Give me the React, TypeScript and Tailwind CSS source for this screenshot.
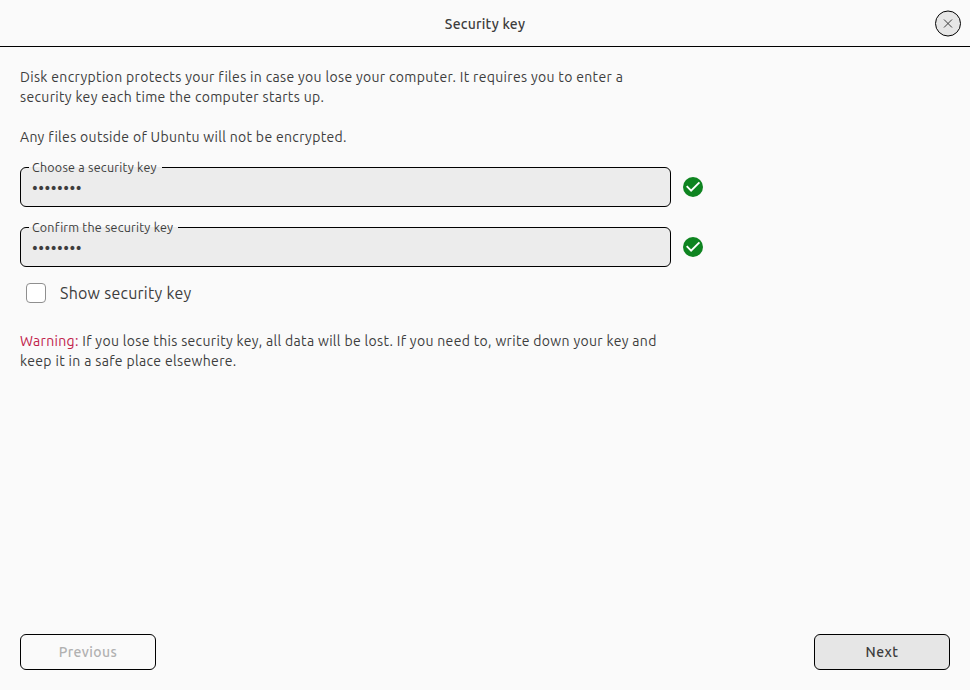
type FieldProps = { label: string; labelClass: string };

function KeyField({ label, labelClass }: FieldProps) {
  return (
    <div className="flex items-start">
      <fieldset className="h-[47px] w-[651px] min-w-0 rounded-md border border-black bg-[#ececec] pl-[11px]">
        <legend className={`-ml-[3px] h-[15px] whitespace-nowrap pl-[3px] text-[12.5px] leading-[15px] ${labelClass}`}>
          {label}
        </legend>
        <input
          readOnly
          aria-label={label}
          value="••••••••"
          className="block h-[26px] w-[600px] bg-transparent text-[16px] leading-[26px] tracking-[0.5px] outline-none"
        />
      </fieldset>
      <svg className="mt-[17px] ml-3 h-5 w-5" viewBox="0 0 20 20" fill="none">
        <circle cx="10" cy="10" r="10" fill="#0e8420" />
        <path d="M3.7 9.2 8.1 13.6 16.4 5.3" stroke="#fff" strokeWidth="1.9" />
      </svg>
    </div>
  );
}

export default function App() {
  return (
    <div className="flex h-[690px] w-[970px] flex-col bg-[#fafafa] font-['Ubuntu','Noto_Sans',sans-serif] text-[14px] leading-5 text-[#3d3d3d]">
      <header className="grid h-[47px] grid-cols-[1fr_auto_1fr] items-center border-b border-black pr-[9px]">
        <span />
        <h1 className="mt-[2px] ml-[9px] whitespace-nowrap font-medium tracking-[0.25px]">Security key</h1>
        <button aria-label="Close" className="mt-[10px] h-[27px] w-[26px] self-start justify-self-end">
          <svg className="h-[27px] w-[26px]" viewBox="0 0 26 27" fill="none">
            <circle cx="13" cy="13.5" r="12.5" fill="#e6e6e6" stroke="#000" />
            <path d="M9 9.5 17 17.5M17 9.5 9 17.5" stroke="#3d3d3d" />
          </svg>
        </button>
      </header>
      <main className="flex flex-1 flex-col px-5 pt-5">
        <p className="whitespace-nowrap">
          <span className="block tracking-[0.33px]">Disk encryption protects your files in case you lose your computer. It requires you to enter a</span>
          <span className="block tracking-[0.33px]">security key each time the computer starts up.</span>
        </p>
        <p className="mt-5 whitespace-nowrap tracking-[0.32px]">Any files outside of Ubuntu will not be encrypted.</p>
        <div className="mt-[13px] flex flex-col gap-[13px]">
          <KeyField label="Choose a security key" labelClass="w-[133px] tracking-[0.24px]" />
          <KeyField label="Confirm the security key" labelClass="w-[149px] tracking-[0.2px]" />
        </div>
        <label className="mt-4 ml-[6px] flex h-5 items-center gap-[14px]">
          <span className="h-5 w-5 rounded-[4px] border border-[#8f8f8f] bg-white" />
          <span className="whitespace-nowrap text-[16px] tracking-[0.25px]">Show security key</span>
        </label>
        <p className="mt-7 whitespace-nowrap">
          <span className="block tracking-[0.33px]"><span className="text-[#c0204a]">Warning:</span> If you lose this security key, all data will be lost. If you need to, write down your key and</span>
          <span className="block tracking-[0.34px]">keep it in a safe place elsewhere.</span>
        </p>
      </main>
      <footer className="flex justify-between px-5 pb-5">
        <button className="h-9 w-[136px] rounded-md border border-black font-medium tracking-[0.4px] text-[#b1b1b1]">Previous</button>
        <button className="h-9 w-[136px] rounded-md border border-black bg-[#e6e6e6] font-medium tracking-[0.5px]">Next</button>
      </footer>
    </div>
  );
}
